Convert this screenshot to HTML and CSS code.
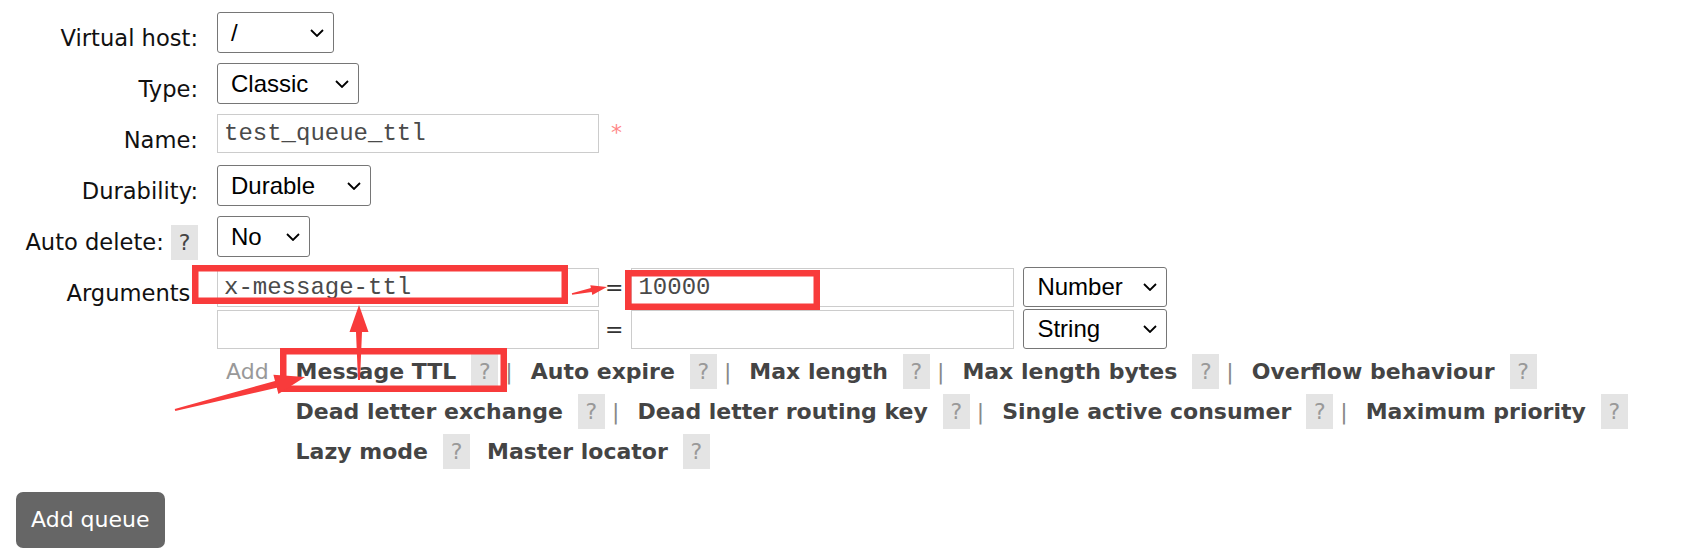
FILE: index.html
```html
<!DOCTYPE html>
<html lang="en">
<head>
<meta charset="utf-8">
<title>Add queue</title>
<link rel="stylesheet" href="styles.css">
</head>
<body>
<div class="page">
  <div class="form">
    <div class="label">Virtual host:</div>
    <div class="field">
      <div class="select w-vhost"><span>/</span><svg class="chev" viewBox="0 0 14 8"><polyline points="1,1 7,7 13,1"/></svg></div>
    </div>

    <div class="label">Type:</div>
    <div class="field">
      <div class="select w-type"><span>Classic</span><svg class="chev" viewBox="0 0 14 8"><polyline points="1,1 7,7 13,1"/></svg></div>
    </div>

    <div class="label">Name:</div>
    <div class="field name-field">
      <input class="text w-name" type="text" value="test_queue_ttl"><span class="req">*</span>
    </div>

    <div class="label">Durability:</div>
    <div class="field">
      <div class="select w-dur"><span>Durable</span><svg class="chev" viewBox="0 0 14 8"><polyline points="1,1 7,7 13,1"/></svg></div>
    </div>

    <div class="label">Auto delete: <span class="help help-dark">?</span></div>
    <div class="field">
      <div class="select w-no"><span>No</span><svg class="chev" viewBox="0 0 14 8"><polyline points="1,1 7,7 13,1"/></svg></div>
    </div>

    <div class="label">Arguments:</div>
    <div class="field args">
      <div class="arg-row">
        <input class="text w-key" type="text" value="x-message-ttl"><span class="eq">=</span><input class="text w-val" type="text" value="10000">
        <div class="select w-argtype"><span>Number</span><svg class="chev" viewBox="0 0 14 8"><polyline points="1,1 7,7 13,1"/></svg></div>
      </div>
      <div class="arg-row">
        <input class="text w-key" type="text" value=""><span class="eq">=</span><input class="text w-val" type="text" value="">
        <div class="select w-argtype"><span>String</span><svg class="chev" viewBox="0 0 14 8"><polyline points="1,1 7,7 13,1"/></svg></div>
      </div>
      <div class="add-row">
        <span class="add">Add</span>
        <div class="links">
          <div class="line">
            <span class="link">Message TTL</span><span class="help">?</span><span class="sep">|</span>
            <span class="link">Auto expire</span><span class="help">?</span><span class="sep">|</span>
            <span class="link">Max length</span><span class="help">?</span><span class="sep">|</span>
            <span class="link">Max length bytes</span><span class="help">?</span><span class="sep">|</span>
            <span class="link">Overflow behaviour</span><span class="help">?</span>
          </div>
          <div class="line">
            <span class="link">Dead letter exchange</span><span class="help">?</span><span class="sep">|</span>
            <span class="link">Dead letter routing key</span><span class="help">?</span><span class="sep">|</span>
            <span class="link">Single active consumer</span><span class="help">?</span><span class="sep">|</span>
            <span class="link">Maximum priority</span><span class="help">?</span>
          </div>
          <div class="line">
            <span class="link">Lazy mode</span><span class="help">?</span>
            <span class="link gap">Master locator</span><span class="help">?</span>
          </div>
        </div>
      </div>
    </div>
  </div>
  <button class="btn" type="button">Add queue</button>
</div>

<svg class="annot" viewBox="0 0 1684 558" aria-hidden="true">
  <g fill="none" stroke="#f83b3b" stroke-width="6.5">
    <rect x="195.25" y="268.25" width="369.5" height="32.5"/>
    <rect x="628.25" y="273.25" width="188.5" height="33.5"/>
    <rect x="283.25" y="351.25" width="220.5" height="37.5"/>
  </g>
  <g fill="#f83b3b">
    <polygon points="572.2,294.8 591.7,292.1 592.3,295.0 607,287 590.3,285.2 590.9,288.1 571.8,293.2"/>
    <polygon points="360,380 362,332 368.5,332 359,305 349.5,332 356,332 358,380"/>
    <polygon points="175.25,410.97 276.8,387.8 278.4,394.1 305,377 273.4,374.7 275.0,381.0 174.75,409.03"/>
  </g>
</svg>
</body>
</html>
```

FILE: styles.css
```css
* {
  box-sizing: border-box;
}

body {
  margin: 0;
  position: relative;
  width: 1684px;
  height: 558px;
  overflow: hidden;
  background: #fff;
  color: #111;
  font-family: "DejaVu Sans", Verdana, sans-serif;
  font-size: 22px;
}

.page {
  padding-top: 12px;
}

.form {
  display: grid;
  grid-template-columns: 198px auto;
  justify-content: start;
  column-gap: 19px;
  row-gap: 10px;
}

.label {
  text-align: right;
  padding-top: 13px;
  line-height: 26px;
  font-size: 22.6px;
  white-space: nowrap;
}

.field {
  display: flex;
  align-items: flex-start;
  min-height: 41px;
}

.select {
  display: flex;
  align-items: center;
  justify-content: space-between;
  height: 41px;
  padding: 0 9px 0 13px;
  border: 1px solid #767676;
  border-radius: 3px;
  background: #fff;
  color: #000;
  font-family: "Liberation Sans", Arial, sans-serif;
  font-size: 24px;
}

.chev {
  width: 14px;
  height: 8px;
  fill: none;
  stroke: #000;
  stroke-width: 1.8;
}

.w-vhost { width: 117px; }
.w-type { width: 142px; }
.w-dur { width: 154px; }
.w-no { width: 93px; }

.w-argtype {
  width: 144px;
  height: 40px;
  margin-left: 9px;
}

.text {
  height: 39px;
  padding: 0 6px;
  border: 1px solid #ccc;
  border-radius: 0;
  background: #fff;
  color: #4a4a4a;
  outline: none;
  font-family: "Liberation Mono", "Courier New", monospace;
  font-size: 24px;
}

.w-name { width: 382px; }
.w-key { width: 382px; }
.w-val { width: 383px; }

.name-field {
  align-items: baseline;
}

.req {
  margin-left: 12px;
  color: #f88;
}

.args {
  flex-direction: column;
}

.arg-row {
  display: flex;
  align-items: center;
  height: 40px;
  margin-bottom: 2px;
}

.eq {
  margin: 0 8px 0 6px;
  color: #333;
}

.add-row {
  display: flex;
  align-items: flex-start;
  margin-top: 0.5px;
  padding-left: 9px;
}

.add {
  color: #999;
  line-height: 40px;
  margin-right: 27px;
}

.line {
  display: flex;
  align-items: baseline;
  height: 40px;
  line-height: 40px;
  white-space: nowrap;
}

.link {
  font-weight: bold;
  color: #444;
}

.gap {
  margin-left: 17px;
}

.help {
  display: inline-block;
  width: 27px;
  height: 35px;
  line-height: 35px;
  margin-left: 15px;
  text-align: center;
  background: #e4e4e4;
  color: #999;
  font-size: 22px;
  font-weight: normal;
}

.help-dark {
  margin: -5px 0 -5px 0;
  color: #444;
}

.sep {
  margin: 0 18px 0 7px;
  color: #888;
}

.btn {
  display: block;
  height: 56px;
  margin: 20px 0 0 16px;
  padding: 0 15px;
  border: none;
  border-radius: 7px;
  background: #666;
  color: #fff;
  font-family: "DejaVu Sans", Verdana, sans-serif;
  font-size: 22px;
}

.annot {
  position: absolute;
  left: 0;
  top: 0;
  width: 1684px;
  height: 558px;
  pointer-events: none;
}
```
